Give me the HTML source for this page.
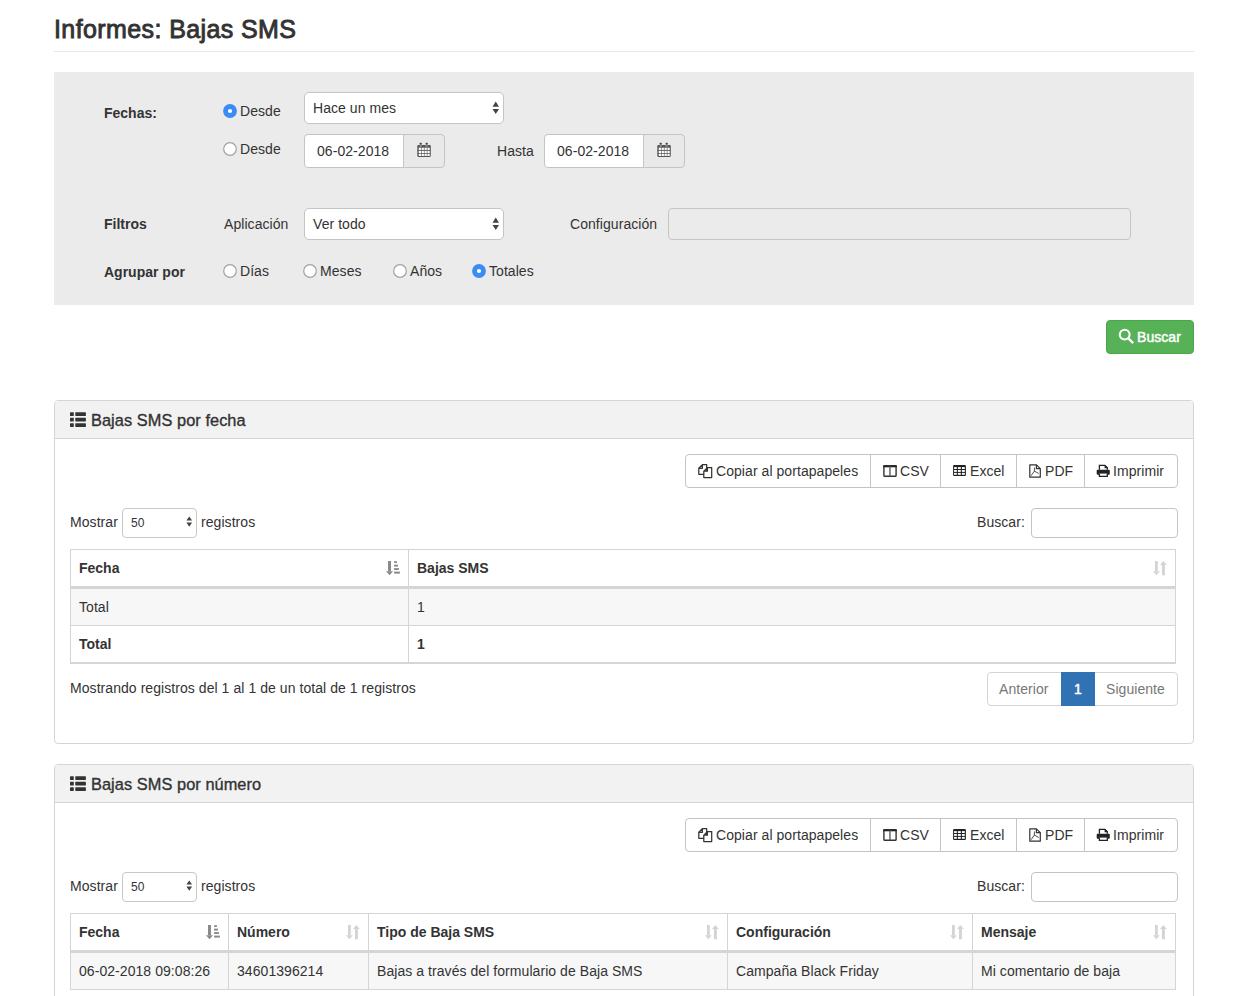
<!DOCTYPE html>
<html><head><meta charset="utf-8">
<style>
*{box-sizing:border-box;margin:0;padding:0}
html,body{width:1238px;height:996px;overflow:hidden;background:#fff}
body{position:relative;font-family:"Liberation Sans",sans-serif;font-size:14px;color:#333;line-height:20px}
.a{position:absolute}
.t{position:absolute;white-space:nowrap;line-height:20px;font-size:14px;letter-spacing:0.06px}
.t.b{letter-spacing:0}
.b{font-weight:bold}
.hr{position:absolute;left:54px;width:1140px;top:51px;height:1px;background:#e8e8e8}
.well{position:absolute;left:54px;top:72px;width:1140px;height:233px;background:#ebebeb}
.radio{position:absolute;width:14px;height:14px;border-radius:50%;background:#fff;border:1px solid #a9a9a9}
.radio.on{background:#3a8ff5;border-color:#2f7fe6}
.radio.on:after{content:"";position:absolute;left:4.25px;top:4.25px;width:3.5px;height:3.5px;border-radius:50%;background:#fff}
.sel{position:absolute;background:#fff;border:1px solid #c4c4c4;border-radius:5px}
.inp{position:absolute;background:#fff;border:1px solid #c4c4c4;border-radius:4px}
.addon{position:absolute;background:#e9e9e9;border:1px solid #c4c4c4;border-radius:0 4px 4px 0}
.panel{position:absolute;left:54px;width:1140px;border:1px solid #d5d5d5;border-radius:4px;background:#fff}
.ph{position:absolute;left:0;top:0;width:1138px;height:38px;background:#f2f2f2;border-bottom:1px solid #d5d5d5;border-radius:3px 3px 0 0}
.btns{position:absolute;height:34px;border:1px solid #c4c4c4;border-radius:4px;background:#fff}
.bdiv{position:absolute;top:0;width:1px;height:32px;background:#ccc}
.tbl{position:absolute;border:1px solid #ddd}
.hl{position:absolute;background:#ddd}
</style></head>
<body>
<div class="t" style="left:54px;top:14px;font-size:25px;line-height:30px;letter-spacing:0.4px;-webkit-text-stroke:0.9px #333">Informes: Bajas SMS</div>
<div class="hr"></div>
<div class="well"></div>

<div class="t b" style="left:104px;top:103px">Fechas:</div>
<div class="a" style="left:223px;top:104px;line-height:0"><svg width="14" height="14" viewBox="0 0 14 14"><circle cx="7" cy="7" r="6.9" fill="#3a8cf4"/><circle cx="7" cy="7" r="2.1" fill="#fff"/></svg></div>
<div class="t" style="left:240px;top:101px">Desde</div>
<div class="sel" style="left:304px;top:92px;width:200px;height:32px"></div>
<div class="t" style="left:313px;top:98px">Hace un mes</div>

<div class="a" style="left:223px;top:142px;line-height:0"><svg width="14" height="14" viewBox="0 0 14 14"><circle cx="7" cy="7" r="6.3" fill="#fff" stroke="#a2a2a2" stroke-width="1.2"/></svg></div>
<div class="t" style="left:240px;top:139px">Desde</div>
<div class="inp" style="left:304px;top:134px;width:100px;height:34px;border-radius:4px 0 0 4px"></div>
<div class="addon" style="left:403px;top:134px;width:42px;height:34px"></div>
<div class="t" style="left:317px;top:141px">06-02-2018</div>
<div class="t" style="left:497px;top:141px">Hasta</div>
<div class="inp" style="left:544px;top:134px;width:100px;height:34px;border-radius:4px 0 0 4px"></div>
<div class="addon" style="left:643px;top:134px;width:42px;height:34px"></div>
<div class="t" style="left:557px;top:141px">06-02-2018</div>

<div class="t b" style="left:104px;top:214px">Filtros</div>
<div class="t" style="left:224px;top:214px">Aplicación</div>
<div class="sel" style="left:304px;top:208px;width:200px;height:32px"></div>
<div class="t" style="left:313px;top:214px">Ver todo</div>
<div class="t" style="left:570px;top:214px">Configuración</div>
<div class="a" style="left:668px;top:208px;width:463px;height:32px;border:1px solid #c6c6c6;border-radius:4px"></div>

<div class="t b" style="left:104px;top:262px">Agrupar por</div>
<div class="a" style="left:223px;top:264px;line-height:0"><svg width="14" height="14" viewBox="0 0 14 14"><circle cx="7" cy="7" r="6.3" fill="#fff" stroke="#a2a2a2" stroke-width="1.2"/></svg></div>
<div class="t" style="left:240px;top:261px">Días</div>
<div class="a" style="left:303px;top:264px;line-height:0"><svg width="14" height="14" viewBox="0 0 14 14"><circle cx="7" cy="7" r="6.3" fill="#fff" stroke="#a2a2a2" stroke-width="1.2"/></svg></div>
<div class="t" style="left:320px;top:261px">Meses</div>
<div class="a" style="left:393px;top:264px;line-height:0"><svg width="14" height="14" viewBox="0 0 14 14"><circle cx="7" cy="7" r="6.3" fill="#fff" stroke="#a2a2a2" stroke-width="1.2"/></svg></div>
<div class="t" style="left:410px;top:261px">Años</div>
<div class="a" style="left:472px;top:264px;line-height:0"><svg width="14" height="14" viewBox="0 0 14 14"><circle cx="7" cy="7" r="6.9" fill="#3a8cf4"/><circle cx="7" cy="7" r="2.1" fill="#fff"/></svg></div>
<div class="t" style="left:489px;top:261px">Totales</div>

<div class="a" style="left:1106px;top:320px;width:88px;height:34px;background:#57b157;border:1px solid #47a847;border-radius:4px"></div>
<div class="t" style="left:1137px;top:327px;color:#fff;-webkit-text-stroke:0.45px #fff">Buscar</div>


<!-- select arrows -->
<svg class="a" style="left:490px;top:100px" width="12" height="16" viewBox="0 0 12 16"><path d="M2.5 6.7 L5.75 1.5 L9 6.7Z M2.5 9 L9 9 L5.75 14Z" fill="#444"/></svg>
<svg class="a" style="left:490px;top:216px" width="12" height="16" viewBox="0 0 12 16"><path d="M2.5 6.7 L5.75 1.5 L9 6.7Z M2.5 9 L9 9 L5.75 14Z" fill="#444"/></svg>
<!-- calendar icons -->
<svg class="a cal" style="left:417px;top:142px" width="14" height="16" viewBox="0 0 14 16"><rect x="0.3" y="3" width="13.5" height="11.9" rx="1.1" fill="#555"/><g fill="#fff"><rect x="1.7" y="5.7" width="2.3" height="2.2"/><rect x="4.6" y="5.7" width="2.3" height="2.2"/><rect x="7.5" y="5.7" width="2.3" height="2.2"/><rect x="10.4" y="5.7" width="2.3" height="2.2"/><rect x="1.7" y="8.8" width="2.3" height="2.2"/><rect x="4.6" y="8.8" width="2.3" height="2.2"/><rect x="7.5" y="8.8" width="2.3" height="2.2"/><rect x="10.4" y="8.8" width="2.3" height="2.2"/><rect x="1.7" y="11.75" width="2.3" height="2.2"/><rect x="4.6" y="11.75" width="2.3" height="2.2"/><rect x="7.5" y="11.75" width="2.3" height="2.2"/><rect x="10.4" y="11.75" width="2.3" height="2.2"/></g><g fill="#8a8a8a"><rect x="2.6" y="1" width="2.2" height="4.2" rx="0.9"/><rect x="8.6" y="1" width="2.2" height="4.2" rx="0.9"/></g><g fill="#444"><rect x="2.6" y="0.8" width="2.2" height="1.4" rx="0.7"/><rect x="8.6" y="0.8" width="2.2" height="1.4" rx="0.7"/></g></svg>
<svg class="a cal" style="left:657px;top:142px" width="14" height="16" viewBox="0 0 14 16"><rect x="0.3" y="3" width="13.5" height="11.9" rx="1.1" fill="#555"/><g fill="#fff"><rect x="1.7" y="5.7" width="2.3" height="2.2"/><rect x="4.6" y="5.7" width="2.3" height="2.2"/><rect x="7.5" y="5.7" width="2.3" height="2.2"/><rect x="10.4" y="5.7" width="2.3" height="2.2"/><rect x="1.7" y="8.8" width="2.3" height="2.2"/><rect x="4.6" y="8.8" width="2.3" height="2.2"/><rect x="7.5" y="8.8" width="2.3" height="2.2"/><rect x="10.4" y="8.8" width="2.3" height="2.2"/><rect x="1.7" y="11.75" width="2.3" height="2.2"/><rect x="4.6" y="11.75" width="2.3" height="2.2"/><rect x="7.5" y="11.75" width="2.3" height="2.2"/><rect x="10.4" y="11.75" width="2.3" height="2.2"/></g><g fill="#8a8a8a"><rect x="2.6" y="1" width="2.2" height="4.2" rx="0.9"/><rect x="8.6" y="1" width="2.2" height="4.2" rx="0.9"/></g><g fill="#444"><rect x="2.6" y="0.8" width="2.2" height="1.4" rx="0.7"/><rect x="8.6" y="0.8" width="2.2" height="1.4" rx="0.7"/></g></svg>
<!-- search icon -->
<svg class="a" style="left:1116px;top:326px" width="20" height="20" viewBox="0 0 20 20"><circle cx="8.7" cy="8.6" r="4.9" fill="none" stroke="#fff" stroke-width="2.1"/><path d="M12.3 12.3 L16.5 16.3" stroke="#fff" stroke-width="2.5" stroke-linecap="round"/></svg>

<div class="panel" style="top:400px;height:344px"><div class="ph"></div></div>
<div class="a" style="left:70px;top:412px;line-height:0"><svg width="17" height="16" viewBox="0 0 17 16"><g fill="#333"><rect x="0" y="0.3" width="3.8" height="3.6" rx="0.4"/><rect x="5.3" y="0.3" width="10.6" height="3.6" rx="0.4"/><rect x="0" y="5.8" width="3.8" height="3.7" rx="0.4"/><rect x="5.3" y="5.8" width="10.6" height="3.7" rx="0.4"/><rect x="0" y="11.3" width="3.8" height="3.7" rx="0.4"/><rect x="5.3" y="11.3" width="10.6" height="3.7" rx="0.4"/></g></svg></div>
<div class="t" style="left:91px;top:409px;font-size:16.35px;line-height:22px;-webkit-text-stroke:0.35px #333">Bajas SMS por fecha</div>
<div class="btns" style="left:685px;top:454px;width:493px"></div>
<div class="a" style="left:870px;top:455px;width:1px;height:32px;background:#c4c4c4"></div>
<div class="a" style="left:940px;top:455px;width:1px;height:32px;background:#c4c4c4"></div>
<div class="a" style="left:1016px;top:455px;width:1px;height:32px;background:#c4c4c4"></div>
<div class="a" style="left:1084px;top:455px;width:1px;height:32px;background:#c4c4c4"></div>
<div class="a" style="left:697px;top:463px;line-height:0"><svg width="16" height="16" viewBox="0 0 16 16"><g fill="#fff" stroke="#333" stroke-width="1.25" stroke-linejoin="round"><path d="M1.8 5.3 L5.4 1.7 H9.7 V11.3 H1.8 Z M1.8 5.3 H5.4 V1.7"/><path d="M6.8 8.2 L10.4 4.6 H14.7 V14.6 H6.8 Z M6.8 8.2 H10.4 V4.6"/></g></svg></div>
<div class="t" style="left:716px;top:461px;">Copiar al portapapeles</div>
<div class="a" style="left:883px;top:465px;line-height:0"><svg width="15" height="13" viewBox="0 0 15 13"><g fill="none" stroke="#333"><rect x="0.9" y="1" width="12.2" height="10.2" rx="0.8" stroke-width="1.4"/></g><rect x="0.2" y="0.2" width="13.6" height="2.1" fill="#222"/><rect x="6.3" y="1" width="1.3" height="10.4" fill="#555"/></svg></div>
<div class="t" style="left:900px;top:461px;">CSV</div>
<div class="a" style="left:953px;top:465px;line-height:0"><svg width="14" height="12" viewBox="0 0 14 12"><rect x="0.1" y="0" width="12.8" height="10.9" rx="1" fill="#222"/><g fill="#fff"><rect x="1.1" y="2.1" width="2.7" height="1.9"/><rect x="4.9" y="2.1" width="2.9" height="1.9"/><rect x="8.9" y="2.1" width="2.9" height="1.9"/><rect x="1.1" y="5.0" width="2.7" height="1.9"/><rect x="4.9" y="5.0" width="2.9" height="1.9"/><rect x="8.9" y="5.0" width="2.9" height="1.9"/><rect x="1.1" y="7.9" width="2.7" height="1.9"/><rect x="4.9" y="7.9" width="2.9" height="1.9"/><rect x="8.9" y="7.9" width="2.9" height="1.9"/></g></svg></div>
<div class="t" style="left:970px;top:461px;">Excel</div>
<div class="a" style="left:1029px;top:464px;line-height:0"><svg width="13" height="15" viewBox="0 0 13 15"><g fill="none" stroke="#333" stroke-width="1.2" stroke-linejoin="round"><path d="M0.8 0.8 H7.4 L11.3 4.7 V13.2 H0.8 Z"/><path d="M7.4 0.8 V4.7 H11.3"/></g><g fill="none" stroke="#444" stroke-width="0.95" stroke-linecap="round"><path d="M5.4 3.9 V7.1 L2.3 11.4 M5.4 7.1 L9.4 9.3"/></g></svg></div>
<div class="t" style="left:1045px;top:461px;">PDF</div>
<div class="a" style="left:1096px;top:464px;line-height:0"><svg width="14" height="14" viewBox="0 0 14 14"><g fill="none" stroke="#222" stroke-width="1.3"><path d="M3.4 5.8 V1.3 H8.8 L11.3 3.8 V5.8"/></g><path d="M8.6 1 H9.2 L11.6 3.4 V4.3 H8.6Z" fill="#222"/><rect x="0.7" y="5.7" width="13.1" height="5" rx="1" fill="#222"/><rect x="3" y="9.6" width="8.4" height="2.3" fill="#fff"/><path d="M3.4 9.5 V12.4 H11.3 V9.5" fill="none" stroke="#222" stroke-width="1.3"/></svg></div>
<div class="t" style="left:1113px;top:461px;">Imprimir</div>
<div class="t" style="left:70px;top:512px;">Mostrar</div>
<div class="sel" style="left:122px;top:508px;width:75px;height:30px;border-radius:4px;border-color:#c8c8c8"></div>
<div class="t" style="left:131px;top:513px;font-size:12px">50</div>
<svg class="a" style="left:185px;top:515px" width="9" height="16" viewBox="0 0 9 16"><path d="M1.4 5.6 L4.25 1.4 L7.1 5.6Z M1.4 7.6 L7.1 7.6 L4.25 11.8Z" fill="#444"/></svg>
<div class="t" style="left:201px;top:512px;">registros</div>
<div class="t" style="left:977px;top:512px;">Buscar:</div>
<div class="inp" style="left:1031px;top:508px;width:147px;height:30px;border-color:#c4c4c4"></div>
<div class="a" style="left:70px;top:549px;width:1106px;height:1px;background:#d5d5d5"></div>
<div class="a" style="left:70px;top:586px;width:1106px;height:3px;background:#d5d5d5"></div>
<div class="t b" style="left:79px;top:558px">Fecha</div>
<div class="a" style="left:386px;top:561px;line-height:0"><svg width="15" height="15" viewBox="0 0 15 15"><g fill="#8a8a8a"><rect x="2" y="0" width="3" height="10.3"/><path d="M0 10.2 H7 L3.5 14.2Z"/><rect x="8.1" y="0.2" width="2.8" height="1.8"/><rect x="8.1" y="3.6" width="3.8" height="2"/><rect x="8.1" y="7.1" width="4.8" height="1.9"/><rect x="8.1" y="10.6" width="5.8" height="2"/></g></svg></div>
<div class="t b" style="left:417px;top:558px">Bajas SMS</div>
<div class="a" style="left:1153px;top:561px;line-height:0"><svg width="15" height="15" viewBox="0 0 15 15"><g fill="#d4d4d4"><rect x="2" y="0" width="2.8" height="10.4"/><path d="M0 10.3 H6.8 L3.4 14.3Z"/><rect x="9" y="3.9" width="2.9" height="10.4"/><path d="M7 4 H13.8 L10.4 0Z"/></g></svg></div>
<div class="a" style="left:71px;top:589px;width:1104px;height:36px;background:#f7f7f7"></div>
<div class="a" style="left:70px;top:625px;width:1106px;height:1px;background:#d5d5d5"></div>
<div class="t" style="left:79px;top:597px">Total</div>
<div class="t" style="left:417px;top:597px">1</div>
<div class="a" style="left:70px;top:662px;width:1106px;height:2px;background:#d5d5d5"></div>
<div class="t b" style="left:79px;top:634px">Total</div>
<div class="t b" style="left:417px;top:634px">1</div>
<div class="a" style="left:70px;top:549px;width:1px;height:115px;background:#d5d5d5"></div>
<div class="a" style="left:408px;top:549px;width:1px;height:115px;background:#d5d5d5"></div>
<div class="a" style="left:1175px;top:549px;width:1px;height:115px;background:#d5d5d5"></div>
<div class="t" style="left:70px;top:678px;">Mostrando registros del 1 al 1 de un total de 1 registros</div>
<div class="a" style="left:987px;top:672px;width:191px;height:34px;border:1px solid #d5d5d5;border-radius:4px"></div>
<div class="a" style="left:1061px;top:672px;width:34px;height:34px;background:#3072b3;border:1px solid #3072b3"></div>
<div class="t" style="left:999px;top:679px;color:#777">Anterior</div>
<div class="t" style="left:1074px;top:679px;color:#fff;-webkit-text-stroke:0.5px #fff">1</div>
<div class="t" style="left:1106px;top:679px;color:#777">Siguiente</div>
<div class="panel" style="top:764px;height:400px"><div class="ph"></div></div>
<div class="a" style="left:70px;top:776px;line-height:0"><svg width="17" height="16" viewBox="0 0 17 16"><g fill="#333"><rect x="0" y="0.3" width="3.8" height="3.6" rx="0.4"/><rect x="5.3" y="0.3" width="10.6" height="3.6" rx="0.4"/><rect x="0" y="5.8" width="3.8" height="3.7" rx="0.4"/><rect x="5.3" y="5.8" width="10.6" height="3.7" rx="0.4"/><rect x="0" y="11.3" width="3.8" height="3.7" rx="0.4"/><rect x="5.3" y="11.3" width="10.6" height="3.7" rx="0.4"/></g></svg></div>
<div class="t" style="left:91px;top:773px;font-size:16.35px;line-height:22px;-webkit-text-stroke:0.35px #333">Bajas SMS por número</div>
<div class="btns" style="left:685px;top:818px;width:493px"></div>
<div class="a" style="left:870px;top:819px;width:1px;height:32px;background:#c4c4c4"></div>
<div class="a" style="left:940px;top:819px;width:1px;height:32px;background:#c4c4c4"></div>
<div class="a" style="left:1016px;top:819px;width:1px;height:32px;background:#c4c4c4"></div>
<div class="a" style="left:1084px;top:819px;width:1px;height:32px;background:#c4c4c4"></div>
<div class="a" style="left:697px;top:827px;line-height:0"><svg width="16" height="16" viewBox="0 0 16 16"><g fill="#fff" stroke="#333" stroke-width="1.25" stroke-linejoin="round"><path d="M1.8 5.3 L5.4 1.7 H9.7 V11.3 H1.8 Z M1.8 5.3 H5.4 V1.7"/><path d="M6.8 8.2 L10.4 4.6 H14.7 V14.6 H6.8 Z M6.8 8.2 H10.4 V4.6"/></g></svg></div>
<div class="t" style="left:716px;top:825px;">Copiar al portapapeles</div>
<div class="a" style="left:883px;top:829px;line-height:0"><svg width="15" height="13" viewBox="0 0 15 13"><g fill="none" stroke="#333"><rect x="0.9" y="1" width="12.2" height="10.2" rx="0.8" stroke-width="1.4"/></g><rect x="0.2" y="0.2" width="13.6" height="2.1" fill="#222"/><rect x="6.3" y="1" width="1.3" height="10.4" fill="#555"/></svg></div>
<div class="t" style="left:900px;top:825px;">CSV</div>
<div class="a" style="left:953px;top:829px;line-height:0"><svg width="14" height="12" viewBox="0 0 14 12"><rect x="0.1" y="0" width="12.8" height="10.9" rx="1" fill="#222"/><g fill="#fff"><rect x="1.1" y="2.1" width="2.7" height="1.9"/><rect x="4.9" y="2.1" width="2.9" height="1.9"/><rect x="8.9" y="2.1" width="2.9" height="1.9"/><rect x="1.1" y="5.0" width="2.7" height="1.9"/><rect x="4.9" y="5.0" width="2.9" height="1.9"/><rect x="8.9" y="5.0" width="2.9" height="1.9"/><rect x="1.1" y="7.9" width="2.7" height="1.9"/><rect x="4.9" y="7.9" width="2.9" height="1.9"/><rect x="8.9" y="7.9" width="2.9" height="1.9"/></g></svg></div>
<div class="t" style="left:970px;top:825px;">Excel</div>
<div class="a" style="left:1029px;top:828px;line-height:0"><svg width="13" height="15" viewBox="0 0 13 15"><g fill="none" stroke="#333" stroke-width="1.2" stroke-linejoin="round"><path d="M0.8 0.8 H7.4 L11.3 4.7 V13.2 H0.8 Z"/><path d="M7.4 0.8 V4.7 H11.3"/></g><g fill="none" stroke="#444" stroke-width="0.95" stroke-linecap="round"><path d="M5.4 3.9 V7.1 L2.3 11.4 M5.4 7.1 L9.4 9.3"/></g></svg></div>
<div class="t" style="left:1045px;top:825px;">PDF</div>
<div class="a" style="left:1096px;top:828px;line-height:0"><svg width="14" height="14" viewBox="0 0 14 14"><g fill="none" stroke="#222" stroke-width="1.3"><path d="M3.4 5.8 V1.3 H8.8 L11.3 3.8 V5.8"/></g><path d="M8.6 1 H9.2 L11.6 3.4 V4.3 H8.6Z" fill="#222"/><rect x="0.7" y="5.7" width="13.1" height="5" rx="1" fill="#222"/><rect x="3" y="9.6" width="8.4" height="2.3" fill="#fff"/><path d="M3.4 9.5 V12.4 H11.3 V9.5" fill="none" stroke="#222" stroke-width="1.3"/></svg></div>
<div class="t" style="left:1113px;top:825px;">Imprimir</div>
<div class="t" style="left:70px;top:876px;">Mostrar</div>
<div class="sel" style="left:122px;top:872px;width:75px;height:30px;border-radius:4px;border-color:#c8c8c8"></div>
<div class="t" style="left:131px;top:877px;font-size:12px">50</div>
<svg class="a" style="left:185px;top:879px" width="9" height="16" viewBox="0 0 9 16"><path d="M1.4 5.6 L4.25 1.4 L7.1 5.6Z M1.4 7.6 L7.1 7.6 L4.25 11.8Z" fill="#444"/></svg>
<div class="t" style="left:201px;top:876px;">registros</div>
<div class="t" style="left:977px;top:876px;">Buscar:</div>
<div class="inp" style="left:1031px;top:872px;width:147px;height:30px;border-color:#c4c4c4"></div>
<div class="a" style="left:70px;top:913px;width:1106px;height:1px;background:#d5d5d5"></div>
<div class="a" style="left:70px;top:950px;width:1106px;height:3px;background:#d5d5d5"></div>
<div class="t b" style="left:79px;top:922px">Fecha</div>
<div class="a" style="left:206px;top:925px;line-height:0"><svg width="15" height="15" viewBox="0 0 15 15"><g fill="#8a8a8a"><rect x="2" y="0" width="3" height="10.3"/><path d="M0 10.2 H7 L3.5 14.2Z"/><rect x="8.1" y="0.2" width="2.8" height="1.8"/><rect x="8.1" y="3.6" width="3.8" height="2"/><rect x="8.1" y="7.1" width="4.8" height="1.9"/><rect x="8.1" y="10.6" width="5.8" height="2"/></g></svg></div>
<div class="t b" style="left:237px;top:922px">Número</div>
<div class="a" style="left:346px;top:925px;line-height:0"><svg width="15" height="15" viewBox="0 0 15 15"><g fill="#d4d4d4"><rect x="2" y="0" width="2.8" height="10.4"/><path d="M0 10.3 H6.8 L3.4 14.3Z"/><rect x="9" y="3.9" width="2.9" height="10.4"/><path d="M7 4 H13.8 L10.4 0Z"/></g></svg></div>
<div class="t b" style="left:377px;top:922px">Tipo de Baja SMS</div>
<div class="a" style="left:705px;top:925px;line-height:0"><svg width="15" height="15" viewBox="0 0 15 15"><g fill="#d4d4d4"><rect x="2" y="0" width="2.8" height="10.4"/><path d="M0 10.3 H6.8 L3.4 14.3Z"/><rect x="9" y="3.9" width="2.9" height="10.4"/><path d="M7 4 H13.8 L10.4 0Z"/></g></svg></div>
<div class="t b" style="left:736px;top:922px">Configuración</div>
<div class="a" style="left:950px;top:925px;line-height:0"><svg width="15" height="15" viewBox="0 0 15 15"><g fill="#d4d4d4"><rect x="2" y="0" width="2.8" height="10.4"/><path d="M0 10.3 H6.8 L3.4 14.3Z"/><rect x="9" y="3.9" width="2.9" height="10.4"/><path d="M7 4 H13.8 L10.4 0Z"/></g></svg></div>
<div class="t b" style="left:981px;top:922px">Mensaje</div>
<div class="a" style="left:1153px;top:925px;line-height:0"><svg width="15" height="15" viewBox="0 0 15 15"><g fill="#d4d4d4"><rect x="2" y="0" width="2.8" height="10.4"/><path d="M0 10.3 H6.8 L3.4 14.3Z"/><rect x="9" y="3.9" width="2.9" height="10.4"/><path d="M7 4 H13.8 L10.4 0Z"/></g></svg></div>
<div class="a" style="left:71px;top:953px;width:1104px;height:36px;background:#f7f7f7"></div>
<div class="a" style="left:70px;top:989px;width:1106px;height:1px;background:#d5d5d5"></div>
<div class="t" style="left:79px;top:961px">06-02-2018 09:08:26</div>
<div class="t" style="left:237px;top:961px">34601396214</div>
<div class="t" style="left:377px;top:961px">Bajas a través del formulario de Baja SMS</div>
<div class="t" style="left:736px;top:961px">Campaña Black Friday</div>
<div class="t" style="left:981px;top:961px">Mi comentario de baja</div>
<div class="a" style="left:70px;top:913px;width:1px;height:77px;background:#d5d5d5"></div>
<div class="a" style="left:228px;top:913px;width:1px;height:77px;background:#d5d5d5"></div>
<div class="a" style="left:368px;top:913px;width:1px;height:77px;background:#d5d5d5"></div>
<div class="a" style="left:727px;top:913px;width:1px;height:77px;background:#d5d5d5"></div>
<div class="a" style="left:972px;top:913px;width:1px;height:77px;background:#d5d5d5"></div>
<div class="a" style="left:1175px;top:913px;width:1px;height:77px;background:#d5d5d5"></div>
</body></html>
